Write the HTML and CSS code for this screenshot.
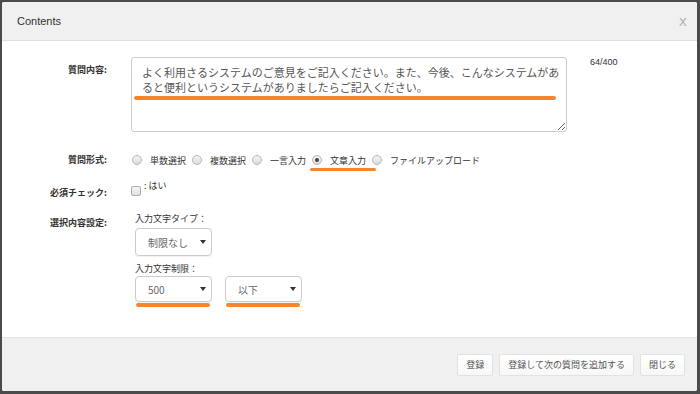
FILE: index.html
```html
<!DOCTYPE html>
<html lang="ja">
<head>
    <meta charset="UTF-8">
    <meta name="viewport" content="width=device-width, initial-scale=1.0">
    <title>Contents</title>
    <link rel="stylesheet" href="styles.css">
</head>
<body>
    <div class="modal">
        <div class="modal-header">
            <span class="modal-title">Contents</span>
            <span class="close">x</span>
        </div>

        <div class="modal-body">
            <div class="form-row row-text">
                <label class="control-label">質問内容:</label>
                <div class="field field-text">
                    <div class="text-wrap">
                        <textarea class="text-input" readonly>よく利用さるシステムのご意見をご記入ください。また、今後、こんなシステムがあると便利というシステムがありましたらご記入ください。</textarea>
                        <span class="mark mark-text"></span>
                    </div>
                    <span class="counter">64/400</span>
                </div>
            </div>

            <div class="form-row row-radio">
                <label class="control-label">質問形式:</label>
                <div class="field radios">
                    <span class="radio"><i class="dot"></i>単数選択</span>
                    <span class="radio"><i class="dot"></i>複数選択</span>
                    <span class="radio"><i class="dot"></i>一言入力</span>
                    <span class="radio checked"><i class="dot"></i>文章入力<span class="mark mark-radio"></span></span>
                    <span class="radio"><i class="dot"></i>ファイルアップロード</span>
                </div>
            </div>

            <div class="form-row row-check">
                <label class="control-label">必須チェック:</label>
                <div class="field">
                    <span class="check"><i class="box"></i>: はい</span>
                </div>
            </div>

            <div class="form-row row-select">
                <label class="control-label">選択内容設定:</label>
                <div class="field selects">
                    <div class="sub-label">入力文字タイプ：</div>
                    <div class="select-line first">
                        <div class="select">制限なし<i class="caret"></i></div>
                    </div>
                    <div class="sub-label">入力文字制限：</div>
                    <div class="select-line">
                        <div class="select">500<i class="caret"></i><span class="mark mark-select"></span></div>
                        <div class="select">以下<i class="caret"></i><span class="mark mark-select"></span></div>
                    </div>
                </div>
            </div>
        </div>

        <div class="modal-footer">
            <button class="btn">登録</button>
            <button class="btn">登録して次の質問を追加する</button>
            <button class="btn">閉じる</button>
        </div>
    </div>
</body>
</html>
```

FILE: styles.css
```css
:root {
    --orange: #f5862e;
    --label: #333;
    --text: #555;
    --line: #ccc;
}

* {
    box-sizing: border-box;
}

body {
    margin: 0;
    background: #4b4b4b;
    font-family: "Liberation Sans", "Noto Sans CJK JP", sans-serif;
    color: var(--label);
}

.modal {
    margin: 2px 3px 3px 2px;
    height: 389px;
    background: #fff;
    border-radius: 2px;
    display: flex;
    flex-direction: column;
    overflow: hidden;
}

.modal-header {
    height: 39px;
    background: #f0f0f0;
    border-bottom: 1px solid #e0e0e0;
    display: flex;
    align-items: center;
    justify-content: space-between;
    padding: 0 10px 0 15px;
}

.modal-title {
    font-size: 11px;
    color: #333;
}

.close {
    font-size: 14px;
    color: #b5b5b5;
    font-family: "DejaVu Sans", sans-serif;
}

.modal-body {
    flex: 1;
    padding-top: 16px;
}

.form-row {
    display: flex;
}

.control-label {
    width: 105px;
    text-align: right;
    font-size: 9px;
    line-height: 14px;
    font-weight: bold;
    color: var(--label);
    flex-shrink: 0;
    font-family: "Noto Sans CJK JP", sans-serif;
}

.field {
    margin-left: 24px;
    font-family: "Noto Sans CJK JP", sans-serif;
    font-size: 9px;
    color: #333;
}

/* textarea */
.field-text {
    display: flex;
    align-items: flex-start;
}

.row-text .control-label {
    padding-top: 6px;
}

.text-wrap {
    position: relative;
}

.text-input {
    display: block;
    width: 436px;
    height: 75px;
    border: 1px solid #ccc;
    border-radius: 3px;
    padding: 7px 3px 0 10px;
    font-family: "Noto Sans CJK JP", sans-serif;
    font-size: 11px;
    line-height: 15px;
    color: var(--text);
    resize: vertical;
    overflow: hidden;
}

.counter {
    margin-left: 23px;
    line-height: 10px;
    margin-top: 0;
    font-size: 9px;
    color: #333;
    font-family: "Liberation Sans", sans-serif;
}

.mark {
    position: absolute;
    height: 4px;
    border-radius: 2px;
    background: var(--orange);
}

.mark-text {
    left: 3px;
    width: 422px;
    top: 39px;
}

/* radios */
.row-radio {
    margin-top: 20px;
    height: 16px;
    align-items: center;
}

.radios {
    display: flex;
    align-items: center;
    margin-left: 25px;
}

.radio {
    position: relative;
    display: flex;
    align-items: center;
    margin-right: 6px;
}

.dot {
    width: 10px;
    height: 10px;
    border-radius: 50%;
    border: 1px solid #b8b8b8;
    background: linear-gradient(#f4f4f4, #dcdcdc);
    margin-right: 8px;
    position: relative;
}

.checked .dot::after {
    content: "";
    position: absolute;
    left: 2px;
    top: 2px;
    width: 4px;
    height: 4px;
    border-radius: 50%;
    background: #444;
}

.mark-radio {
    left: -2px;
    right: -10px;
    top: 14px;
    height: 3px;
}

/* checkbox */
.row-check {
    margin-top: 9px;
}

.row-check .control-label {
    padding-top: 9px;
}

.check {
    display: flex;
    align-items: flex-start;
    line-height: 14px;
    padding-top: 2px;
}

.box {
    width: 10px;
    height: 10px;
    border: 1px solid #aaa;
    border-radius: 2px;
    background: linear-gradient(#f5f5f5, #e0e0e0);
    margin-top: 7px;
    margin-right: 3px;
}

/* selects */
.row-select {
    margin-top: 13px;
}

.row-select .control-label {
    padding-top: 3px;
}

.selects {
    margin-left: 28px;
}

.sub-label {
    line-height: 12px;
}

.select-line {
    display: flex;
    gap: 13px;
    margin-top: 1px;
}

.select-line.first {
    margin: 3px 0 7px;
}

.select {
    position: relative;
    width: 77px;
    height: 26px;
    border: 1px solid #ccc;
    border-radius: 4px;
    display: flex;
    align-items: center;
    padding-left: 12px;
    font-size: 10px;
    color: #666;
    box-shadow: 0 1px 1px rgba(0, 0, 0, 0.06);
}

.first .select {
    height: 28px;
}

.caret {
    position: absolute;
    right: 5px;
    top: 50%;
    margin-top: -2px;
    border-left: 3px solid transparent;
    border-right: 3px solid transparent;
    border-top: 4px solid #333;
}

.mark-select {
    left: 0;
    right: 1px;
    top: 26px;
    height: 4px;
}

/* footer */
.modal-footer {
    height: 54px;
    background: #f0f0f0;
    border-top: 1px solid #e4e4e4;
    display: flex;
    align-items: center;
    justify-content: flex-end;
    gap: 6px;
    padding-right: 12px;
}

.btn {
    height: 22px;
    padding: 0 8px;
    background: linear-gradient(#fff, #f7f7f7);
    border: 1px solid #e2e2e2;
    border-radius: 2px;
    font-family: "Noto Sans CJK JP", sans-serif;
    font-size: 9px;
    color: #555;
}
```
